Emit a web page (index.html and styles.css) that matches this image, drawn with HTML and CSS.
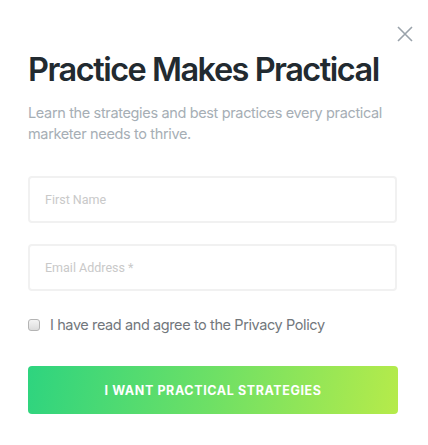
FILE: index.html
```html
<!DOCTYPE html>
<html lang="en">
<head>
    <meta charset="UTF-8">
    <meta name="viewport" content="width=device-width, initial-scale=1.0">
    <title>Practice Makes Practical</title>
    <link rel="stylesheet" href="styles.css">
</head>
<body>

    <div class="modal">
        <div class="top_bar">
            <button class="close" type="button" aria-label="Close">
                <svg width="16" height="16" viewBox="0 0 16 16"><path d="M1 1L15 15M15 1L1 15" stroke="#9aa3ab" stroke-width="1.6" fill="none"/></svg>
            </button>
        </div>

        <h1>Practice Makes Practical</h1>
        <p class="intro">Learn the strategies and best practices every practical marketer needs to thrive.</p>

        <form id="signup_form">
            <input type="text" name="first_name" placeholder="First Name">
            <input type="email" name="email" placeholder="Email Address *" required>

            <label class="agree">
                <input type="checkbox" name="agree">
                <span>I have read and agree to the Privacy Policy</span>
            </label>

            <button class="submit" type="submit">I want practical strategies</button>
        </form>
    </div>

</body>
</html>
```

FILE: styles.css
```css
body { margin: 0; padding: 0; background: #fff; font-family: Inter, "Liberation Sans", sans-serif; }
.modal { width: 370px; padding: 0 0 0 28px; }
.top_bar { display: flex; justify-content: flex-end; margin-right: -15px; padding-top: 26px; height: 16px; }
.close { background: none; border: none; padding: 0; width: 16px; height: 16px; cursor: pointer; }
.close svg { display: block; }
h1 { margin: 8px 0 0; font-size: 32.5px; font-weight: 600; color: #222a30; letter-spacing: -1.5px; line-height: 40px; white-space: nowrap; }
.intro { margin: 12px 0 0; width: 360px; font-size: 14.5px; line-height: 21px; color: #a6aeb5; letter-spacing: -0.35px; }
form { display: flex; flex-direction: column; margin-top: 32px; }
form input[type="text"], form input[type="email"] { box-sizing: border-box; width: 369px; height: 47px; margin: 0 0 21px; padding: 0 15px; border: 2px solid #f1f1f1; border-radius: 4px; font-family: Roboto, sans-serif; font-size: 12.5px; outline: none; }
form input::placeholder { color: #c9c9c9; }
.agree { display: flex; align-items: center; gap: 10px; margin-top: 4px; font-size: 14.5px; color: #72777c; letter-spacing: -0.4px; }
.agree input { appearance: none; -webkit-appearance: none; margin: 0; width: 12px; height: 12px; border: 1px solid #b4b4b4; border-radius: 3px; background: linear-gradient(#f4f4f4, #dcdcdc); }
.submit { margin-top: 33px; width: 370px; height: 48px; border: none; border-radius: 4px; background: linear-gradient(100deg, #2ed47f 0%, #6ee065 50%, #b6eb4a 100%); color: #fff; font-family: Inter, sans-serif; font-size: 12.5px; font-weight: 700; letter-spacing: 0.6px; text-transform: uppercase; cursor: pointer; }
```
